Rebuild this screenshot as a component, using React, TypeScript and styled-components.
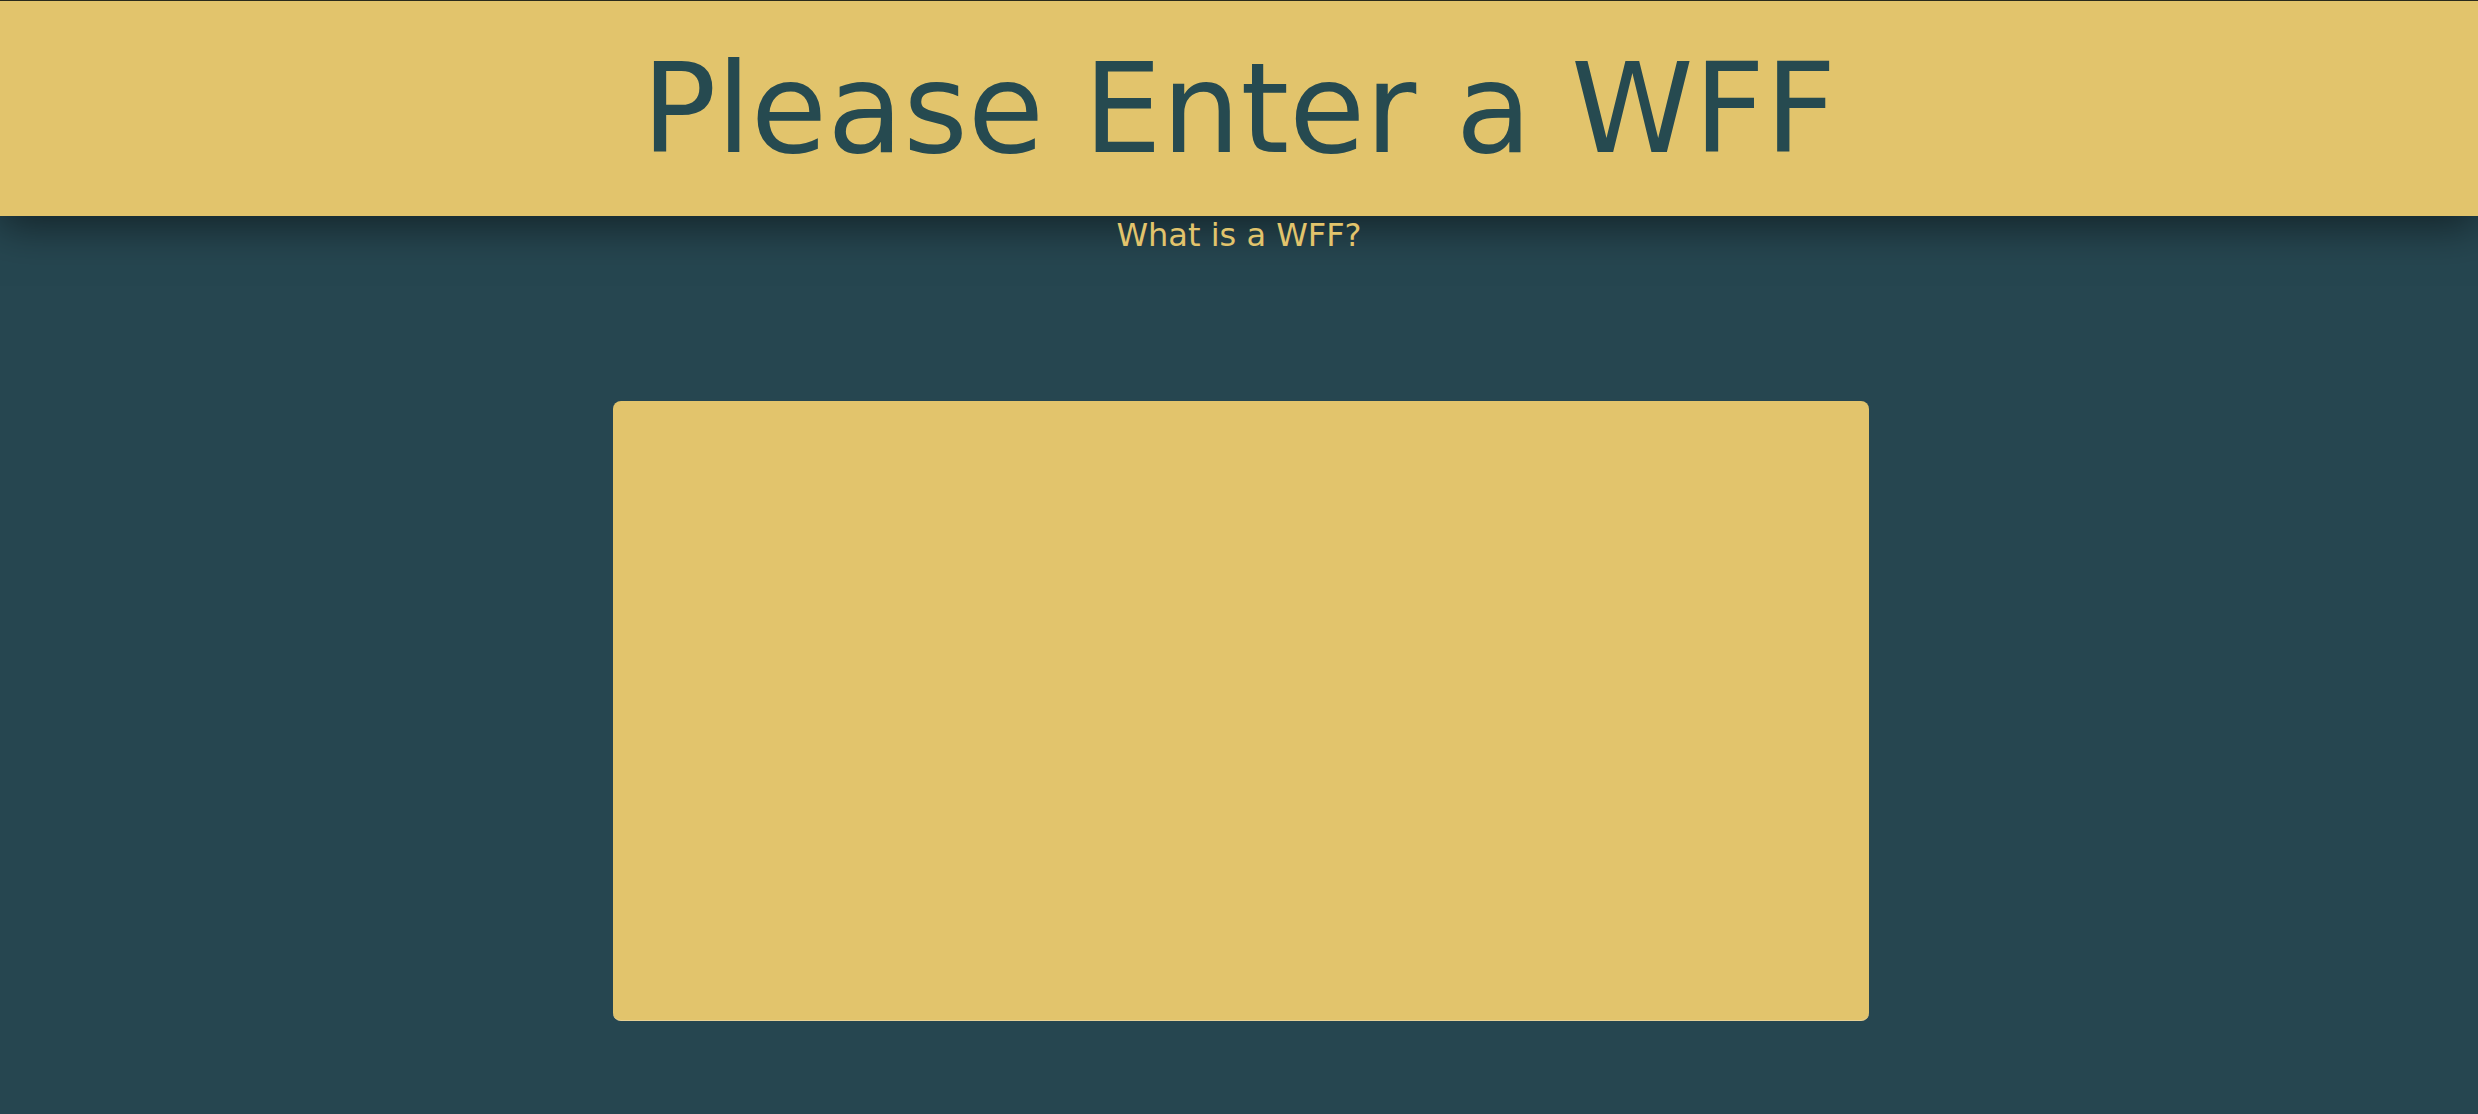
import React from "react";
import styled, { createGlobalStyle } from "styled-components";

const GlobalStyle = createGlobalStyle`
  html, body {
    margin: 0;
    padding: 0;
    background: #264650;
    font-family: "DejaVu Sans", "Liberation Sans", sans-serif;
  }
  #root {
    min-height: 100vh;
  }
`;

const Page = styled.div`
  min-height: 100vh;
  background: #264650;
  display: flex;
  flex-direction: column;
  align-items: center;
`;

const Header = styled.header`
  box-sizing: border-box;
  width: 100%;
  height: 216px;
  border-top: 1px solid #2a2a1c;
  background: #e2c46c;
  box-shadow: 0 10px 40px rgba(0, 0, 0, 0.5);
  display: flex;
  align-items: center;
  justify-content: center;
  position: relative;
  z-index: 1;
`;

const Title = styled.h1`
  margin: 0;
  font-family: "DejaVu Sans", sans-serif;
  font-weight: 400;
  font-size: 124px;
  line-height: normal;
  color: #264a50;
`;

const HelpLink = styled.a`
  position: relative;
  z-index: 2;
  font-family: "DejaVu Sans", sans-serif;
  font-size: 32px;
  line-height: normal;
  color: #e2c46c;
  text-decoration: none;
  cursor: pointer;
`;

const Input = styled.textarea`
  box-sizing: border-box;
  margin-top: 147px;
  margin-left: 4px;
  width: 1256px;
  height: 620px;
  background: #e2c46c;
  border: none;
  border-bottom: 1px solid #e8d296;
  border-radius: 8px;
  outline: none;
  resize: none;
  padding: 16px;
  font-family: "DejaVu Sans", sans-serif;
  font-size: 32px;
  color: #264a50;
`;

export default function App() {
  return (
    <>
      <GlobalStyle />
      <Page>
        <Header>
          <Title>Please Enter a WFF</Title>
        </Header>
        <HelpLink>What is a WFF?</HelpLink>
        <Input spellCheck={false} />
      </Page>
    </>
  );
}
